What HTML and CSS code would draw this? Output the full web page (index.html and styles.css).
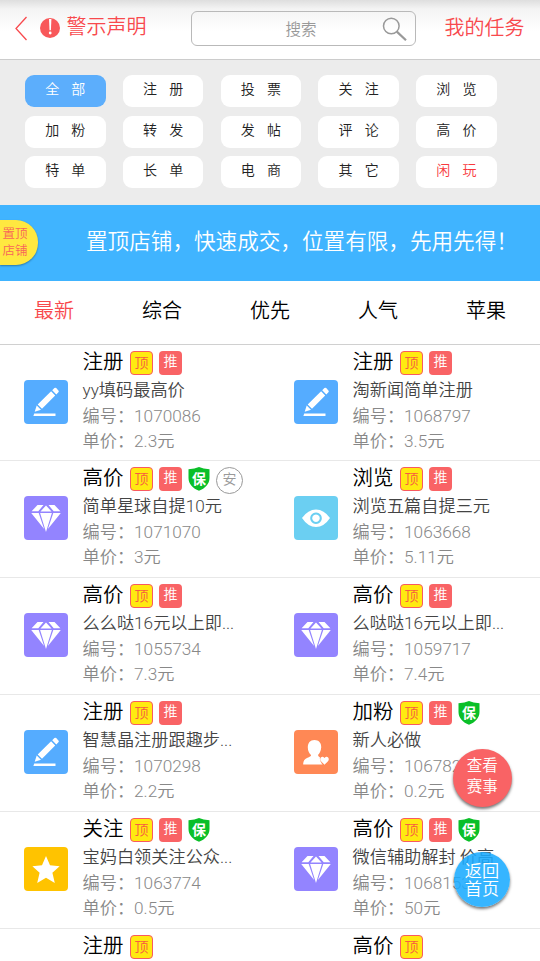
FILE: index.html
```html
<!DOCTYPE html>
<html lang="zh-CN">
<head>
<meta charset="utf-8">
<title>任务列表</title>
<link rel="stylesheet" href="styles.css">
</head>
<body>
<svg class="defs" aria-hidden="true">
  <symbol id="pen" viewBox="0 0 44 44">
    <path d="M28.2 10.2 30.4 8.1Q31.3 7.3 32.2 8.1L34.4 10.4Q35.3 11.3 34.4 12.2L32.3 14.4ZM27.1 11.3 31.2 15.5 18 28.8 13.7 24.6ZM12.7 25.6 17 29.8 10.7 31.8ZM10.2 33.5H31.5V36H9.4Z"/>
  </symbol>
  <symbol id="gem" viewBox="0 0 44 44">
    <path d="M13.5 9 19.5 9 14.3 15.3 7.6 15.3ZM30.5 9 24.5 9 29.7 15.3 36.4 15.3ZM22 9.6 27.5 15.4 16.5 15.4ZM7.2 17 14.7 17 20.1 33ZM36.8 17 29.3 17 23.9 33ZM16.1 17H27.9L22 36Z"/>
  </symbol>
  <symbol id="eye" viewBox="0 0 44 44">
    <path fill-rule="evenodd" d="M8 22Q14 13.5 22 13.5T36 22Q30 31 22 31T8 22ZM22 16.4a5.8 5.8 0 1 0 .01 0ZM22 18.4a3.8 3.8 0 1 1-.01 0Z"/>
  </symbol>
  <symbol id="fan" viewBox="0 0 44 44">
    <path d="M20.5 10C25 10 27.4 13 27.2 17.5 27 21 25.4 23.5 24 25Q24 26.4 26 27.4 25.2 31 28.6 34.6H9.2Q9 29.5 13 28 17.5 26.5 17 25C15.4 23.5 13.8 21 13.8 17.5 13.8 13 16 10 20.5 10ZM30.5 34.8 27 31.2C24.7 28.5 28 25 30.5 28 33 25 36.3 28.5 34 31.2Z"/>
  </symbol>
  <symbol id="star" viewBox="0 0 44 44">
    <path d="M22 9 26 18.2 35.6 19.2 28.4 25.7 30.8 36 22 30.8 13.2 36 15.6 25.7 8.4 19.2 18 18.2Z"/>
  </symbol>
  <symbol id="shield" viewBox="0 0 22 24">
    <path d="M11 0Q15 2 21.5 2.2V11C21.5 17 17 21.5 11 23.7 5 21.5 .5 17 .5 11V2.2Q7 2 11 0Z"/>
  </symbol>
</svg>

<header class="header">
  <svg class="back" viewBox="0 0 13 25"><path d="M11.5 1 1 12.5 11.5 24"/></svg>
  <svg class="alert" viewBox="0 0 20 20"><circle cx="10" cy="10" r="10"/><path d="M9 1h2.4l-.5 11.2H9.5z"/><circle class="dot" cx="10.2" cy="15" r="1.4"/></svg>
  <span class="notice">警示声明</span>
  <div class="search"><span>搜索</span>
    <svg viewBox="0 0 25 25"><circle cx="9.3" cy="9" r="7.8"/><path class="handle" d="M14.8 14.6 24 23.3"/></svg>
  </div>
  <span class="mine">我的任务</span>
</header>

<nav class="filters">
  <span class="pill active">全 部</span><span class="pill">注 册</span><span class="pill">投 票</span><span class="pill">关 注</span><span class="pill">浏 览</span>
  <span class="pill">加 粉</span><span class="pill">转 发</span><span class="pill">发 帖</span><span class="pill">评 论</span><span class="pill">高 价</span>
  <span class="pill">特 单</span><span class="pill">长 单</span><span class="pill">电 商</span><span class="pill">其 它</span><span class="pill hot">闲 玩</span>
</nav>

<section class="banner">
  <div class="tag">置顶<br>店铺</div>
  <div class="slogan">置顶店铺，快速成交，位置有限，先用先得！</div>
</section>

<nav class="tabs"><span class="current">最新</span><span>综合</span><span>优先</span><span>人气</span><span>苹果</span></nav>

<main class="list">
  <article class="task">
    <svg class="icon blue"><use href="#pen"/></svg>
    <div class="info">
      <div class="head"><b>注册</b><i class="top">顶</i><i class="push">推</i></div>
      <p class="name">yy填码最高价</p><p>编号：1070086</p><p>单价：2.3元</p>
    </div>
  </article>
  <article class="task">
    <svg class="icon blue"><use href="#pen"/></svg>
    <div class="info">
      <div class="head"><b>注册</b><i class="top">顶</i><i class="push">推</i></div>
      <p class="name">淘新闻简单注册</p><p>编号：1068797</p><p>单价：3.5元</p>
    </div>
  </article>
  <article class="task">
    <svg class="icon purple"><use href="#gem"/></svg>
    <div class="info">
      <div class="head"><b>高价</b><i class="top">顶</i><i class="push">推</i><i class="safe"><svg><use href="#shield"/></svg><span>保</span></i><i class="android">安</i></div>
      <p class="name">简单星球自提10元</p><p>编号：1071070</p><p>单价：3元</p>
    </div>
  </article>
  <article class="task">
    <svg class="icon cyan"><use href="#eye"/></svg>
    <div class="info">
      <div class="head"><b>浏览</b><i class="top">顶</i><i class="push">推</i></div>
      <p class="name">浏览五篇自提三元</p><p>编号：1063668</p><p>单价：5.11元</p>
    </div>
  </article>
  <article class="task">
    <svg class="icon purple"><use href="#gem"/></svg>
    <div class="info">
      <div class="head"><b>高价</b><i class="top">顶</i><i class="push">推</i></div>
      <p class="name">么么哒16元以上即...</p><p>编号：1055734</p><p>单价：7.3元</p>
    </div>
  </article>
  <article class="task">
    <svg class="icon purple"><use href="#gem"/></svg>
    <div class="info">
      <div class="head"><b>高价</b><i class="top">顶</i><i class="push">推</i></div>
      <p class="name">么哒哒16元以上即...</p><p>编号：1059717</p><p>单价：7.4元</p>
    </div>
  </article>
  <article class="task">
    <svg class="icon blue"><use href="#pen"/></svg>
    <div class="info">
      <div class="head"><b>注册</b><i class="top">顶</i><i class="push">推</i></div>
      <p class="name">智慧晶注册跟趣步...</p><p>编号：1070298</p><p>单价：2.2元</p>
    </div>
  </article>
  <article class="task">
    <svg class="icon orange"><use href="#fan"/></svg>
    <div class="info">
      <div class="head"><b>加粉</b><i class="top">顶</i><i class="push">推</i><i class="safe"><svg><use href="#shield"/></svg><span>保</span></i></div>
      <p class="name">新人必做</p><p>编号：1067823</p><p>单价：0.2元</p>
    </div>
  </article>
  <article class="task">
    <svg class="icon yellow"><use href="#star"/></svg>
    <div class="info">
      <div class="head"><b>关注</b><i class="top">顶</i><i class="push">推</i><i class="safe"><svg><use href="#shield"/></svg><span>保</span></i></div>
      <p class="name">宝妈白领关注公众...</p><p>编号：1063774</p><p>单价：0.5元</p>
    </div>
  </article>
  <article class="task">
    <svg class="icon purple"><use href="#gem"/></svg>
    <div class="info">
      <div class="head"><b>高价</b><i class="top">顶</i><i class="push">推</i><i class="safe"><svg><use href="#shield"/></svg><span>保</span></i></div>
      <p class="name">微信辅助解封 价高</p><p>编号：1068153</p><p>单价：50元</p>
    </div>
  </article>
  <article class="task">
    <div class="icon"></div>
    <div class="info"><div class="head"><b>注册</b><i class="top">顶</i></div></div>
  </article>
  <article class="task">
    <div class="icon"></div>
    <div class="info"><div class="head"><b>高价</b><i class="top">顶</i></div></div>
  </article>
</main>

<div class="float match">查看<br>赛事</div>
<div class="float home">返回<br>首页</div>
</body>
</html>
```

FILE: styles.css
```css
* { box-sizing: border-box; }
html, body { height: 961px; overflow: hidden; }
body {
  margin: 0;
  position: relative;
  width: 540px;
  background: #fff;
  color: #000;
  font-family: Roboto, "Noto Sans CJK SC", sans-serif;
  font-weight: 350;
}
.defs { display: none; }

.header {
  height: 60px;
  display: flex;
  align-items: flex-start;
  border-bottom: 1px solid #ccc;
  background: linear-gradient(#dedede, #f4f4f4 9px, #fff 32px);
  color: #f8494d;
  font-size: 20px;
  line-height: 30px;
}
.back { width: 13px; height: 25px; margin: 16px 0 0 15px; fill: none; stroke: #f8494d; stroke-width: 1.3; }
.alert { width: 20px; height: 20px; margin: 18px 0 0 12px; fill: #f8585a; }
.alert path, .alert .dot { fill: #fff; }
.notice { width: 80px; margin: 12px 0 0 6.5px; }
.search {
  width: 225px;
  height: 35px;
  margin: 11px 0 0 44px;
  display: flex;
  align-items: center;
  border: 1.5px solid #b9b9b9;
  border-radius: 6px;
  color: #999;
  font-size: 15.5px;
}
.search span { margin: 2px 0 0 94px; }
.search svg { width: 25px; height: 25px; margin: 2px 0 0 65px; fill: none; stroke: #999; stroke-width: 1.5; }
.search .handle { stroke-width: 2.2; }
.mine { margin: 13px 0 0 29px; white-space: nowrap; }

.filters {
  height: 144.5px;
  padding: 15px 43px 0 25px;
  display: grid;
  grid-template-columns: repeat(5, 80.5px);
  grid-auto-rows: 32px;
  gap: 8.5px 17.3px;
  background: #ececec;
}
.pill {
  border-radius: 9px;
  background: #fff;
  color: #222;
  text-align: center;
  font-size: 14px;
  line-height: 29px;
  word-spacing: 8.8px;
}
.pill.active { background: #5caefc; color: #fff; }
.pill.hot { color: #f8393d; }

.banner {
  height: 76.5px;
  display: flex;
  align-items: flex-start;
  background: #40b4ff;
}
.tag {
  width: 38px;
  height: 45px;
  margin-top: 15px;
  padding: 5px 0 0 2.5px;
  border-radius: 0 22px 22px 0;
  background: #ffe840;
  box-shadow: 0 1px 2px #0005;
  color: #f8645a;
  font-size: 12.5px;
  line-height: 17px;
}
.slogan { margin: 21px 0 0 48px; color: #fff; font-size: 21.6px; line-height: 32px; white-space: nowrap; }

.tabs {
  height: 64px;
  display: grid;
  grid-template-columns: repeat(5, 108px);
  border-bottom: 1px solid #d0d0d0;
  text-align: center;
  font-size: 20px;
  line-height: 60px;
}
.tabs .current { color: #f8494d; }

.list {
  display: grid;
  grid-template-columns: 270px 270px;
  grid-template-rows: 116px repeat(4, 117px);
  grid-auto-rows: 32px;
}
.task {
  display: flex;
  gap: 14.5px;
  padding-left: 24px;
  border-bottom: 1px solid #e8e8e8;
}
.task:nth-last-child(-n+2) { height: 32px; border: 0; }
.icon { width: 44px; height: 44px; margin-top: 35px; flex: none; border-radius: 4px; fill: #fff; }
div.icon { height: 0; margin: 0; }
.blue { background: #55acff; }
.purple { background: #9384ff; }
.cyan { background: #6bcff2; }
.orange { background: #ff8855; }
.yellow { background: #ffc300; }
.info { color: #888; font-size: 17.2px; line-height: 25.5px; white-space: nowrap; }
.info p { margin: 0; }
.info .name { color: #444; }
.head { display: flex; height: 33px; padding-top: 2px; color: #000; }
.task:nth-last-child(-n+2) .head { height: 32px; }
.head b { width: 47.5px; font-size: 20.5px; font-weight: 350; line-height: 31px; }
.head i {
  width: 23px;
  height: 24px;
  margin: 4px 6px 0 0;
  border-radius: 4px;
  text-align: center;
  font-style: normal;
  font-size: 14px;
}
.head .top { border: 1.5px solid #f85a60; background: #ffea10; color: #f85a40; line-height: 22px; }
.head .push { background: #f96365; color: #fff; line-height: 20px; }
.head .safe { width: 22px; display: grid; color: #fff; font-weight: 700; line-height: 24px; }
.safe svg, .safe span { grid-area: 1 / 1; }
.safe svg { width: 22px; height: 24px; fill: #0abf28; }
.head .android { width: 27px; height: 27px; border: 1.5px solid #999; border-radius: 50%; color: #999; line-height: 22px; }

.float {
  position: absolute;
  border-radius: 50%;
  color: #fff;
  text-align: center;
  box-shadow: 0 2px 3px #0008;
}
.match { left: 453px; top: 749px; width: 58.5px; height: 58px; padding-top: 7px; background: #f96365; font-size: 15.5px; line-height: 21px; }
.home { left: 454px; top: 852px; width: 56px; height: 55px; padding-top: 11px; background: #1aabffe0; font-size: 17.2px; line-height: 17.5px; }
```
